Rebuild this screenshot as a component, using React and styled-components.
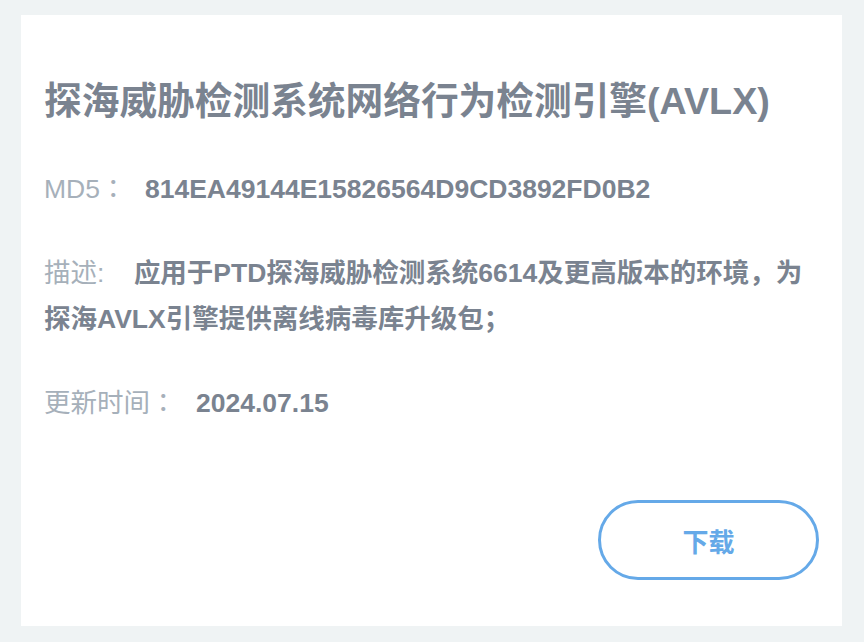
import React from "react";
import styled, { createGlobalStyle } from "styled-components";

const GlobalStyle = createGlobalStyle`
  html, body {
    margin: 0;
    padding: 0;
    background: #eff3f4;
  }
  body {
    font-family: "Liberation Sans", "Noto Sans CJK SC", sans-serif;
  }
`;

const pkg = {
  name: "探海威胁检测系统网络行为检测引擎(AVLX)",
  md5: "814EA49144E15826564D9CD3892FD0B2",
  desc: "应用于PTD探海威胁检测系统6614及更高版本的环境，为探海AVLX引擎提供离线病毒库升级包；",
  date: "2024.07.15",
};

export default function App() {
  return (
    <>
      <GlobalStyle />
      <Page>
        <Card>
          <Title>{pkg.name}</Title>
          <Info>
            <Row>
              <Label>MD5：</Label>
              <Value gap={18.5}>{pkg.md5}</Value>
            </Row>
            <Row>
              <Label>描述:</Label>
              <Value gap={29.5}>{pkg.desc}</Value>
            </Row>
            <Row>
              <Label>更新时间：</Label>
              <Value gap={19.5}>{pkg.date}</Value>
            </Row>
          </Info>
          <DownloadButton>下载</DownloadButton>
        </Card>
      </Page>
    </>
  );
}

const Page = styled.div`
  padding: 15px 22px 16px 21px;
`;

const Card = styled.div`
  background: #ffffff;
  height: 611px;
  box-sizing: border-box;
  padding: 61px 23px 46px 23px;
  display: flex;
  flex-direction: column;
`;

const Title = styled.h1`
  margin: 0;
  font-size: 37.7px;
  line-height: 50px;
  font-weight: bold;
  color: #7a8390;
`;

const Info = styled.div`
  margin-top: 40px;
  display: flex;
  flex-direction: column;
  gap: 38px;
`;

const Row = styled.p`
  margin: 0;
  font-size: 26.5px;
  line-height: 46px;
`;

const Label = styled.span`
  font-family: "Liberation Sans", "Noto Sans CJK JP", sans-serif;
  color: #a6b0ba;
  font-weight: normal;
`;

const Value = styled.span`
  color: #7a8390;
  font-weight: bold;
  margin-left: ${(p) => p.gap}px;
`;

const DownloadButton = styled.button`
  margin-top: auto;
  align-self: flex-end;
  width: 221px;
  height: 80px;
  box-sizing: border-box;
  border: 3px solid #65a9e8;
  border-radius: 40px;
  background: #ffffff;
  color: #65a9e8;
  font-family: "Liberation Sans", "Noto Sans CJK SC", sans-serif;
  font-size: 26px;
  font-weight: bold;
  cursor: pointer;
`;
